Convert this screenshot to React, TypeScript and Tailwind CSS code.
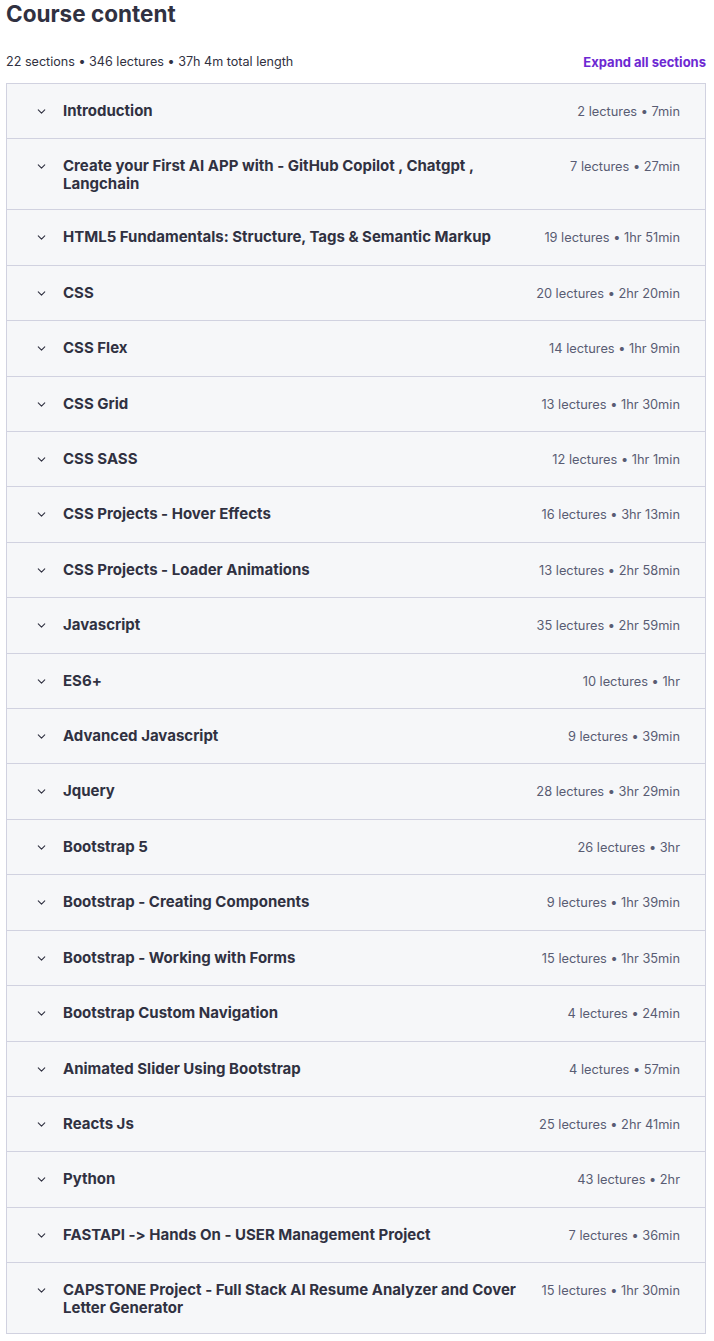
import { ChevronDown } from 'lucide-react';

// ── Data ──────────────────────────────────────────────────────────────────────

const sections: { title: string; meta: string }[] = [
  { title: 'Introduction', meta: '2 lectures • 7min' },
  { title: 'Create your First AI APP with - GitHub Copilot , Chatgpt , Langchain', meta: '7 lectures • 27min' },
  { title: 'HTML5 Fundamentals: Structure, Tags & Semantic Markup', meta: '19 lectures • 1hr 51min' },
  { title: 'CSS', meta: '20 lectures • 2hr 20min' },
  { title: 'CSS Flex', meta: '14 lectures • 1hr 9min' },
  { title: 'CSS Grid', meta: '13 lectures • 1hr 30min' },
  { title: 'CSS SASS', meta: '12 lectures • 1hr 1min' },
  { title: 'CSS Projects - Hover Effects', meta: '16 lectures • 3hr 13min' },
  { title: 'CSS Projects - Loader Animations', meta: '13 lectures • 2hr 58min' },
  { title: 'Javascript', meta: '35 lectures • 2hr 59min' },
  { title: 'ES6+', meta: '10 lectures • 1hr' },
  { title: 'Advanced Javascript', meta: '9 lectures • 39min' },
  { title: 'Jquery', meta: '28 lectures • 3hr 29min' },
  { title: 'Bootstrap 5', meta: '26 lectures • 3hr' },
  { title: 'Bootstrap - Creating Components', meta: '9 lectures • 1hr 39min' },
  { title: 'Bootstrap - Working with Forms', meta: '15 lectures • 1hr 35min' },
  { title: 'Bootstrap Custom Navigation', meta: '4 lectures • 24min' },
  { title: 'Animated Slider Using Bootstrap', meta: '4 lectures • 57min' },
  { title: 'Reacts Js', meta: '25 lectures • 2hr 41min' },
  { title: 'Python', meta: '43 lectures • 2hr' },
  { title: 'FASTAPI -> Hands On - USER Management Project', meta: '7 lectures • 36min' },
  { title: 'CAPSTONE Project - Full Stack AI Resume Analyzer and Cover Letter Generator', meta: '15 lectures • 1hr 30min' },
];

// ── Row ───────────────────────────────────────────────────────────────────────

function SectionRow({ title, meta, first }: { title: string; meta: string; first: boolean }) {
  return (
    <div
      className={`flex items-start bg-[#f6f7f9] pl-[28px] pr-[25px] py-[16px] ${
        first ? '' : 'border-t border-[#d1d2e0]'
      }`}
    >
      <ChevronDown className="mt-[5px] h-[13px] w-[13px] shrink-0 text-[#303141]" strokeWidth={2} />
      <div className="ml-[15px] flex-1 pr-[20px] pt-[2px] text-[15px] font-bold leading-[18px] text-[#303141]">
        {title}
      </div>
      <div className="shrink-0 pt-[1px] text-[12.8px] leading-[21.4px] text-[#595c73]">{meta}</div>
    </div>
  );
}

// ── Page ──────────────────────────────────────────────────────────────────────

export default function App() {
  return (
    <div
      className="min-h-screen bg-white [font-feature-settings:'calt'_0]"
      style={{ fontFamily: 'Inter, "Noto Sans", sans-serif' }}
    >
      <div className="ml-[6px] w-[700px]">
        <h2 className="text-[22.5px] font-bold leading-[27px] text-[#303141]">Course content</h2>
        <div className="mt-[25px] flex items-center justify-between">
          <span className="text-[12.6px] leading-[20px] text-[#303141]">
            22 sections • 346 lectures • 37h 4m total length
          </span>
          <button className="text-[13px] font-bold leading-[20px] text-[#6d28d2]">Expand all sections</button>
        </div>
        <div className="mt-[11px] border border-[#d1d2e0]">
          {sections.map((s, i) => (
            <SectionRow key={s.title} title={s.title} meta={s.meta} first={i === 0} />
          ))}
        </div>
      </div>
    </div>
  );
}
